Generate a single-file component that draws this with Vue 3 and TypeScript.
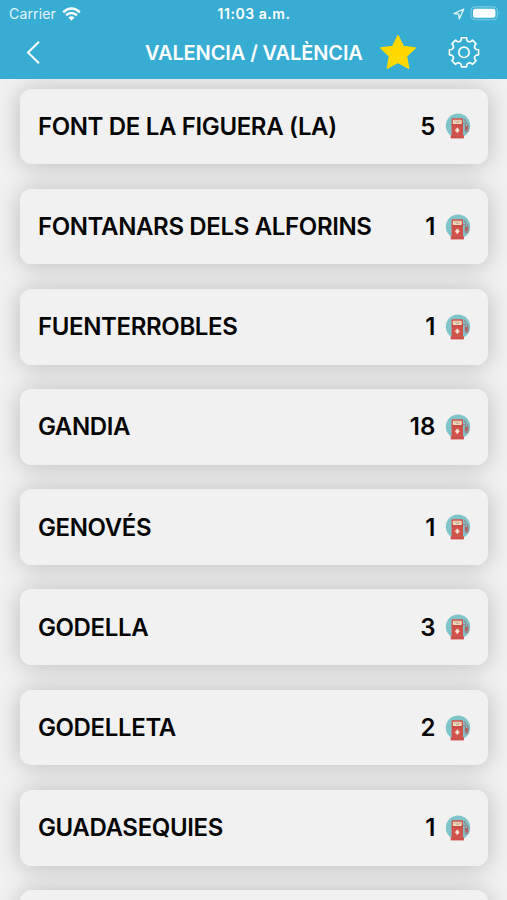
<script setup lang="ts">
interface Town {
  name: string
  stations: number
}

const towns: Town[] = [
  { name: 'FONT DE LA FIGUERA (LA)', stations: 5 },
  { name: 'FONTANARS DELS ALFORINS', stations: 1 },
  { name: 'FUENTERROBLES', stations: 1 },
  { name: 'GANDIA', stations: 18 },
  { name: 'GENOVÉS', stations: 1 },
  { name: 'GODELLA', stations: 3 },
  { name: 'GODELLETA', stations: 2 },
  { name: 'GUADASEQUIES', stations: 1 },
]

// Outline of an eight-toothed cog centred on the origin
function cogPath(teeth: number, outer: number, inner: number): string {
  const point = (radius: number, degrees: number): string => {
    const a = ((degrees - 90) * Math.PI) / 180
    return `${(radius * Math.cos(a)).toFixed(2)} ${(radius * Math.sin(a)).toFixed(2)}`
  }
  const step = 360 / teeth
  let d = `M${point(outer, -10)}`
  for (let i = 0; i < teeth; i++) {
    const c = i * step
    d += `L${point(outer, c + 10)}L${point(inner + 0.8, c + 13)}`
    d += `Q${point(inner - 1, c + step / 2)} ${point(inner + 0.8, c + step - 13)}`
    d += `L${point(outer, c + step - 10)}`
  }
  return d + 'Z'
}

const cog = cogPath(8, 14.8, 11.8)
</script>

<template>
  <div class="screen">
    <header class="header">
      <div class="status">
        <div class="carrier">
          <span>Carrier</span>
          <svg class="wifi" width="19" height="14" viewBox="0 0 19 14" fill="none" stroke="#fff" stroke-width="2.5">
            <path d="M1.2 5.2Q9.5 -2.2 17.8 5.2" />
            <path d="M4.1 8.3Q9.5 3.6 14.9 8.3" />
            <path d="M6.4 10.6Q9.5 7.9 12.6 10.6L9.5 13.8Z" fill="#fff" stroke="none" />
          </svg>
        </div>
        <span class="clock">11:03 a.m.</span>
        <div class="indicators">
          <svg width="12" height="12" viewBox="0 0 12 12" fill="none" stroke="#e6f6fb" stroke-width="1.3" stroke-linejoin="round">
            <path d="M10.8 1L1 5.7L5.7 6.2L6.3 10.8Z" />
          </svg>
          <svg class="battery" width="31" height="15" viewBox="0 0 31 15">
            <rect x="1" y=".9" width="26.4" height="12.8" rx="4" fill="none" stroke="#7ccae3" stroke-width="1.1" />
            <rect x="3" y="2.8" width="22.4" height="9" rx="2" fill="#fff" />
            <path d="M28.8 5.2Q30.4 7.3 28.8 9.4Z" fill="#8ed1e7" />
          </svg>
        </div>
      </div>
      <nav class="nav">
        <svg class="back" width="16" height="24" viewBox="0 0 16 24" fill="none" stroke="#fff" stroke-width="2">
          <path d="M14 1.8L3 12.5L14 23.2" />
        </svg>
        <h1 class="title">VALENCIA / VALÈNCIA</h1>
        <svg class="star" width="38" height="36" viewBox="0 0 38 36">
          <path d="M19 1.6L24.3 12.4L36.2 14L27.5 22.3L29.7 34.2L19 28.5L8.3 34.2L10.5 22.3L1.8 14L13.7 12.4Z" fill="#ffd800" stroke="#ffd800" stroke-width="1.4" stroke-linejoin="round" />
        </svg>
        <svg class="gear" width="34" height="34" viewBox="-17 -17.3 34 34" fill="none" stroke="#fff" stroke-width="1.6" stroke-linejoin="round">
          <path :d="cog" />
          <circle r="5.2" />
        </svg>
      </nav>
    </header>
    <main class="list">
      <article v-for="town in towns" :key="town.name" class="card">
        <div class="face">
          <span class="name">{{ town.name }}</span>
          <span class="count">{{ town.stations }}</span>
          <svg class="pump" width="26" height="26" viewBox="0 0 26 26">
            <circle cx="13" cy="12.7" r="12.2" fill="#7fc4c9" />
            <path d="M18 10.5H19.5Q20.3 10.5 20.3 12V17.5Q20.3 19 21.7 19T23 17V12L20.3 8.3L19.5 6.3" fill="none" stroke="#9b7c86" stroke-width="1.1" />
            <path d="M20 13.4L22.8 12.6V16.4L20.8 18Z" fill="#b75d5c" />
            <path d="M6.6 6.2Q6.6 5.2 7.6 5.2H17Q18 5.2 18 6.2V22.5H6.6Z" fill="#d2524b" />
            <rect x="5.7" y="22.2" width="13.2" height="3.2" fill="#cf4f48" />
            <rect x="7.9" y="6.8" width="8.8" height="4.2" rx=".7" fill="#f3dfc1" />
            <path d="M8.8 8.1H15.8M10.8 9.6H14.3" stroke="#b99583" stroke-width=".7" />
            <path d="M6.6 12H18" stroke="#b94440" stroke-width=".8" />
            <path d="M12.3 14.8L14.3 17.3L12.3 19.8L10.3 17.3Z" fill="#fbe6d6" stroke="#f5cfc0" stroke-width=".8" stroke-linejoin="round" />
          </svg>
        </div>
      </article>
      <article class="card"><div class="face"></div></article>
    </main>
  </div>
</template>

<style>
body {
  background: #f1f1f1;
}
</style>

<style scoped>
.screen {
  display: flex;
  flex-direction: column;
  height: 900px;
  overflow: hidden;
  background: #f1f1f1;
  font-family: Inter, "Liberation Sans", sans-serif;
}
.header {
  flex: none;
  height: 79px;
  background: #37add3;
  color: #fff;
  z-index: 2;
}
.status {
  display: grid;
  grid-template-columns: 1fr auto 1fr;
  align-items: center;
  height: 27px;
  padding: 0 6px 0 9px;
  font-size: 14px;
}
.carrier {
  display: flex;
  align-items: center;
  gap: 6px;
  color: #e4f5fa;
  letter-spacing: 0.15px;
}
.clock {
  margin-right: 2px;
  font-weight: 600;
  font-size: 14px;
  letter-spacing: 0.55px;
}
.indicators {
  display: flex;
  justify-content: flex-end;
  align-items: center;
  gap: 5px;
}
.nav {
  display: flex;
  align-items: center;
  height: 50px;
  padding: 0 26px 0 25px;
}
.title {
  flex: none;
  width: 217px;
  margin: 0 0 0 104px;
  padding-top: 2px;
  font-size: 20px;
  font-weight: 600;
  line-height: 26px;
  letter-spacing: -0.1px;
  white-space: nowrap;
}
.star {
  margin-left: 17px;
}
.gear {
  margin-left: auto;
}
.list {
  display: flex;
  flex-direction: column;
  gap: 24.4px;
  padding: 9.5px 19.5px 0 20.3px;
}
.card {
  flex: none;
  height: 75.8px;
  border-radius: 12px;
  box-shadow: 0 1px 24px rgba(0, 0, 0, 0.23);
}
/* Faces sit above every card's shadow, so a shadow only fills the gutters */
.face {
  position: relative;
  z-index: 1;
  display: flex;
  align-items: center;
  box-sizing: border-box;
  height: 100%;
  padding: 0 17px 0 17.6px;
  border-radius: inherit;
  background: #f1f1f1;
  color: #050505;
  font-size: 24px;
  font-weight: 600;
}
.name {
  flex: 1;
  white-space: nowrap;
  letter-spacing: -0.35px;
}
.count {
  letter-spacing: 0.1px;
}
.pump {
  flex: none;
  margin-left: 9px;
}
</style>
